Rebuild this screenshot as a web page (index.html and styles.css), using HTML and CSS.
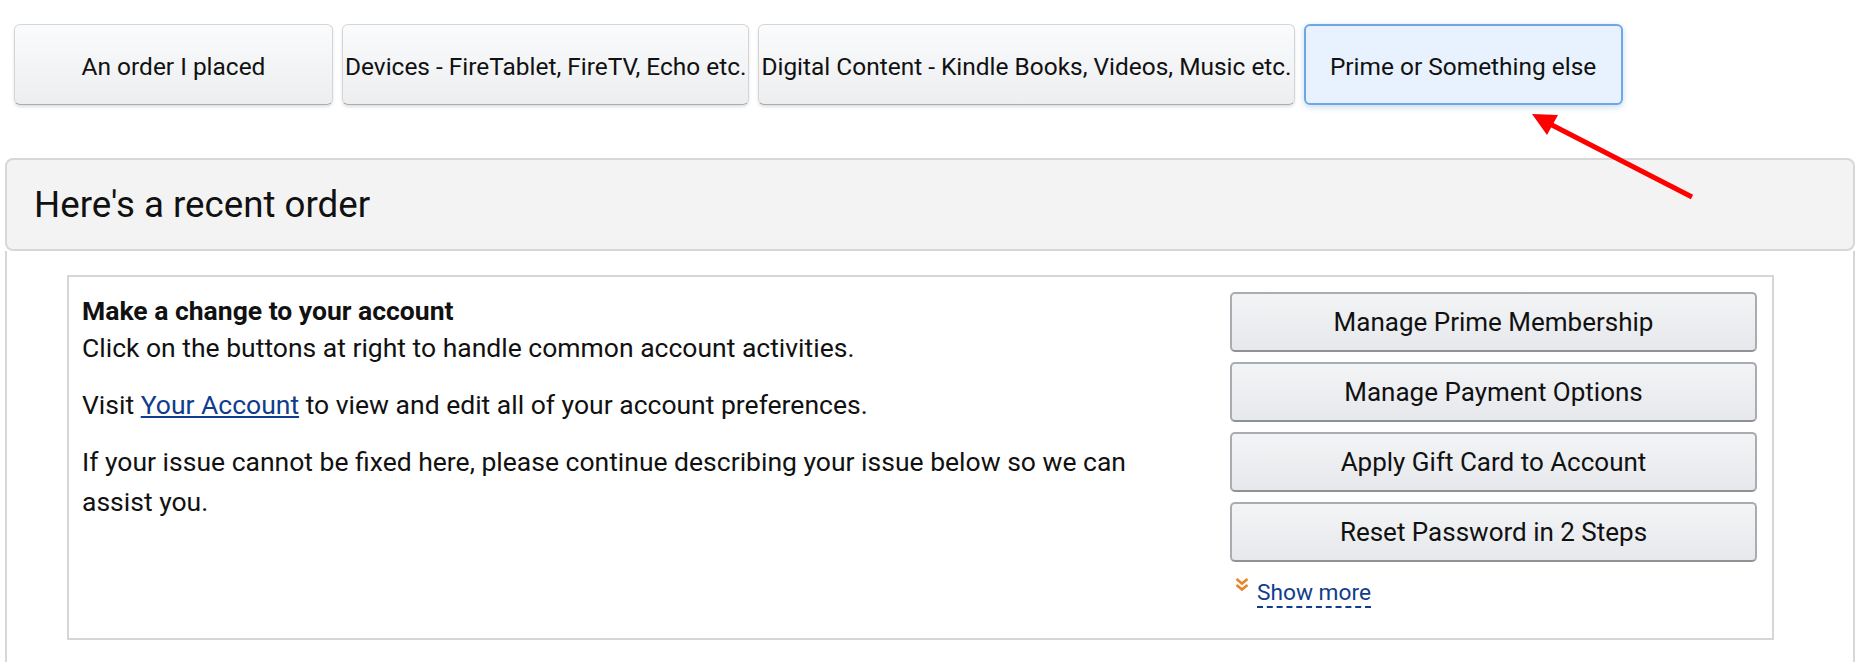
FILE: index.html
```html
<!DOCTYPE html>
<html lang="en">
<head>
  <meta charset="UTF-8" />
  <title>Contact Us</title>
  <link rel="stylesheet" href="styles.css">
</head>
<body>

  <!-- Issue type tabs -->
  <nav class="issue-tabs">
    <button class="tab">An order I placed</button>
    <button class="tab">Devices - FireTablet, FireTV, Echo etc.</button>
    <button class="tab">Digital Content - Kindle Books, Videos, Music etc.</button>
    <button class="tab tab-selected">Prime or Something else</button>
  </nav>

  <!-- Recent order panel -->
  <section class="panel">
    <div class="panel-header">Here's a recent order</div>
    <div class="panel-body">
      <div class="account-box">
        <div class="account-text">
          <p><strong class="lead">Make a change to your account</strong>Click on the buttons at right to handle common account activities.</p>
          <p>Visit <a href="#">Your Account</a> to view and edit all of your account preferences.</p>
          <p>If your issue cannot be fixed here, please continue describing your issue below so we can assist you.</p>
        </div>
        <div class="account-actions">
          <button class="action">Manage Prime Membership</button>
          <button class="action">Manage Payment Options</button>
          <button class="action">Apply Gift Card to Account</button>
          <button class="action">Reset Password in 2 Steps</button>
          <a class="show-more" href="#">
            <svg width="16" height="16" viewBox="0 0 16 16"><path d="M2.5 2 L8 6.5 L13.5 2 M2.5 8 L8 12.5 L13.5 8" fill="none" stroke="#e8842a" stroke-width="2.6"/></svg>
            <span>Show more</span>
          </a>
        </div>
      </div>
    </div>
  </section>

  <!-- Red annotation arrow -->
  <svg class="annotation-arrow" width="200" height="110" viewBox="0 0 200 110">
    <line x1="28" y1="23" x2="172" y2="97" stroke="#f00" stroke-width="5"/>
    <polygon points="12,14 38,15 27,35" fill="#f00"/>
  </svg>

</body>
</html>
```

FILE: styles.css
```css
body {
  margin: 0;
  font-family: Roboto, "Liberation Sans", Arial, sans-serif;
  color: #111;
  background-color: #fff;
}
.issue-tabs {
  display: flex;
  gap: 9px;
  padding: 24px 0 0 14px;
}
.tab {
  box-sizing: border-box;
  min-width: 319px;
  height: 81px;
  padding: 3px 2px 0 2px;
  font-family: inherit;
  font-size: 24.45px;
  color: #111;
  background: linear-gradient(#fafbfc, #eceef0);
  border: 1px solid #d3d6d8;
  border-bottom-color: #a9acb0;
  border-radius: 6px;
  box-shadow: 0 2px 3px rgba(0, 0, 0, 0.12);
}
.tab-selected {
  background: #e8f2fe;
  border: 2px solid #6fa7e3;
  box-shadow: 0 2px 6px rgba(60, 130, 210, 0.3);
}
.panel {
  margin: 53px 9px 0 5px;
}
.panel-header {
  box-sizing: border-box;
  height: 93px;
  display: flex;
  align-items: center;
  padding-left: 27px;
  font-size: 36.7px;
  color: #111;
  background-color: #f3f3f4;
  border: 2px solid #d7d7d7;
  border-radius: 8px;
}
.panel-body {
  border-left: 2px solid #d7d7d7;
  border-right: 2px solid #d7d7d7;
  padding: 24px 79px 40px 60px;
}
.account-box {
  display: flex;
  justify-content: space-between;
  border: 2px solid #d6d6d6;
  padding: 15px 15px 30px 13px;
}
.account-text {
  width: 1080px;
  margin-top: 2px;
  font-size: 26.5px;
  line-height: 40px;
}
.account-text p {
  margin: 0 0 17px 0;
}
.account-text .lead {
  display: block;
  line-height: 34px;
}
.account-text a {
  color: #0f3d8c;
  text-decoration: underline;
}
.account-actions {
  width: 527px;
  display: flex;
  flex-direction: column;
  gap: 10px;
}
.action {
  height: 60px;
  font-family: inherit;
  font-size: 26px;
  color: #111;
  background: linear-gradient(#f3f4f6, #e6e8eb);
  border: 2px solid #a9acb1;
  border-bottom-color: #8f9297;
  border-radius: 5px;
}
.show-more {
  display: flex;
  align-items: flex-start;
  gap: 7px;
  margin: 8px 0 0 4px;
  font-size: 22.7px;
  color: #0f3d8c;
  text-decoration: none;
}
.show-more svg {
  margin-top: -3px;
}
.show-more span {
  border-bottom: 2px dashed #0f3d8c;
  line-height: 26px;
}
.annotation-arrow {
  position: absolute;
  left: 1520px;
  top: 100px;
}
```
